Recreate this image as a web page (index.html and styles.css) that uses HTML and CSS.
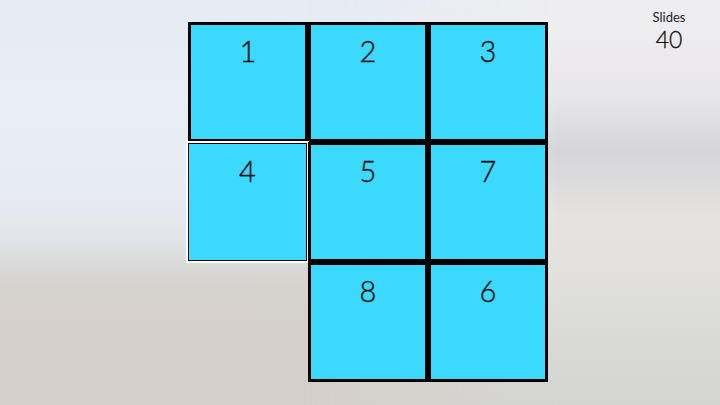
FILE: index.html
```html
<!DOCTYPE html>
<html>
<head>
<meta charset="utf-8">
<link rel="stylesheet" href="styles.css">
</head>
<body>
<div class="stage">
  <div class="board">
    <div class="tile"><span class="num">1</span></div>
    <div class="tile"><span class="num">2</span></div>
    <div class="tile"><span class="num">3</span></div>
    <div class="tile selected"><span class="num">4</span></div>
    <div class="tile"><span class="num">5</span></div>
    <div class="tile"><span class="num">7</span></div>
    <div class="empty"></div>
    <div class="tile"><span class="num">8</span></div>
    <div class="tile"><span class="num">6</span></div>
  </div>
  <div class="counter">
    <div class="counter-label">Slides</div>
    <div class="counter-value">40</div>
  </div>
</div>
</body>
</html>
```
FILE: styles.css
```css
html, body {
  margin: 0;
  padding: 0;
}
body {
  width: 720px;
  height: 405px;
  overflow: hidden;
  position: relative;
  font-family: "Lato", "Open Sans", sans-serif;
  color: #111;
  background: linear-gradient(180deg,
    #e5ebf3 0px,
    #e9eef6 100px,
    #e7ebf1 200px,
    #e1e4e9 240px,
    #d8d7d4 272px,
    #d5d1cb 300px,
    #d5d0c8 405px);
}
body::before {
  content: "";
  position: absolute;
  inset: 0;
  background: linear-gradient(180deg,
    #eeeef1 0px,
    #eceaec 60px,
    #e6e5e8 100px,
    #d6d5d8 150px,
    #dcdbdc 180px,
    #e5e3e0 215px,
    #e3e2de 260px,
    #dadad7 330px,
    #d4d5d3 405px);
  -webkit-mask-image: linear-gradient(90deg, transparent 0px, transparent 300px, #000 560px);
  mask-image: linear-gradient(90deg, transparent 0px, transparent 300px, #000 560px);
}
.stage {
  position: relative;
  display: flex;
  align-items: flex-start;
  height: 405px;
}
.board {
  display: grid;
  grid-template-columns: repeat(3, 120px);
  grid-template-rows: repeat(3, 120px);
  margin-left: 188px;
  margin-top: 22px;
}
.tile {
  box-sizing: border-box;
  background: #3cd9fe;
  border: 3px solid #000;
  display: flex;
  justify-content: center;
  padding-top: 8px;
}
.tile.selected {
  border: 1px solid #000;
  margin: 1px 1px 1px 0;
  padding-top: 9px;
  box-shadow: 0 0 0 2px #fff;
}
.num {
  font-size: 29px;
  line-height: 35px;
  font-weight: 300;
  -webkit-text-stroke: 0.4px #111;
}
.counter {
  margin-left: auto;
  margin-right: 21px;
  margin-top: 9px;
  width: 60px;
  display: flex;
  flex-direction: column;
  align-items: center;
}
.counter-label {
  font-size: 13px;
  line-height: 16px;
  color: #222;
}
.counter-value {
  font-size: 23px;
  line-height: 28px;
  font-weight: 300;
  -webkit-text-stroke: 0.3px #111;
  color: #111;
}
```
